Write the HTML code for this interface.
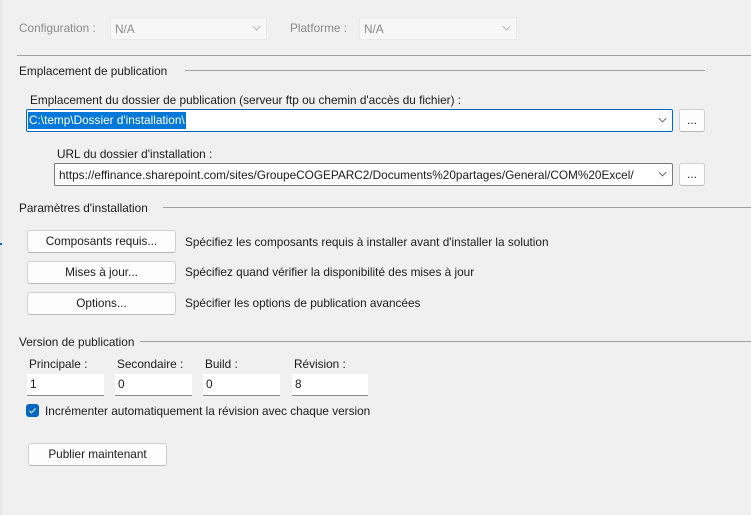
<!DOCTYPE html>
<html><head><meta charset="utf-8"><style>
*{box-sizing:border-box;margin:0;padding:0}
body{width:751px;height:515px;background:#f0f0f0;font-family:"Liberation Sans",sans-serif;font-size:11.8px;color:#1a1a1a;position:relative;overflow:hidden}
.a{position:absolute;white-space:nowrap}
.line{position:absolute;height:1px;background:#a0a0a0}
.combo{position:absolute;background:#fff;border:1px solid #7a7a7a;border-radius:2px;height:23px;padding:4px 0 0 4px}
.chev{position:absolute;right:6px;width:7px;height:7px;border-right:1px solid #555;border-bottom:1px solid #555;transform:rotate(45deg) scale(.8);top:5px}
.btn{position:absolute;background:#fdfdfd;border:1px solid #d0d0d0;border-bottom-color:#b8b8b8;border-radius:3px;height:23px;text-align:center;line-height:20px}
.inp{position:absolute;background:#fff;border-bottom:1px solid #8a8a8a;height:22px;padding:3px 0 0 3px}
</style></head><body>
<div class="a" style="left:0;top:0;width:2px;height:515px;background:#e6e6e6"></div>
<div class="a" style="left:19px;top:21px;color:#8a8a8a">Configuration :</div>
<div class="combo" style="left:110px;top:17px;width:157px;background:#f7f7f7;border-color:#e8e8e8;color:#8a8a8a">N/A<div class="chev" style="border-color:#aaa"></div></div>
<div class="a" style="left:290px;top:21px;color:#8a8a8a">Platforme :</div>
<div class="combo" style="left:359px;top:17px;width:158px;background:#f7f7f7;border-color:#e8e8e8;color:#8a8a8a">N/A<div class="chev" style="border-color:#aaa"></div></div>
<div class="line" style="left:17px;top:55px;width:734px"></div>
<div class="a" style="left:19px;top:64px">Emplacement de publication</div>
<div class="line" style="left:185px;top:70px;width:520px"></div>
<div class="a" style="left:30px;top:93px">Emplacement du dossier de publication (serveur ftp ou chemin d'accès du fichier) :</div>
<div class="combo" style="left:26px;top:109px;width:647px;border-color:#0067c0;padding:3px 0 0 1px"><span style="background:#0078d7;color:#fff;padding:1px 1px 2px 1px">C:\temp\Dossier d'installation\</span><div class="chev"></div></div>
<div class="btn" style="left:679px;top:109px;width:26px">...</div>
<div class="a" style="left:57px;top:147px">URL du dossier d'installation :</div>
<div class="combo" style="left:54px;top:163px;width:619px">https://effinance.sharepoint.com/sites/GroupeCOGEPARC2/Documents%20partages/General/COM%20Excel/<div class="chev"></div></div>
<div class="btn" style="left:679px;top:163px;width:26px">...</div>
<div class="a" style="left:19px;top:201px">Paramètres d'installation</div>
<div class="line" style="left:163px;top:207px;width:588px"></div>
<div class="a" style="left:0;top:243px;width:2px;height:2px;background:#0067c0"></div>
<div class="btn" style="left:27px;top:230px;width:149px">Composants requis...</div>
<div class="a" style="left:185px;top:235px">Spécifiez les composants requis à installer avant d'installer la solution</div>
<div class="btn" style="left:27px;top:261px;width:149px">Mises à jour...</div>
<div class="a" style="left:185px;top:265px">Spécifiez quand vérifier la disponibilité des mises à jour</div>
<div class="btn" style="left:27px;top:292px;width:149px">Options...</div>
<div class="a" style="left:185px;top:296px">Spécifier les options de publication avancées</div>
<div class="a" style="left:19px;top:335px">Version de publication</div>
<div class="line" style="left:140px;top:341px;width:611px"></div>
<div class="a" style="left:29px;top:357px">Principale :</div>
<div class="a" style="left:117px;top:357px">Secondaire :</div>
<div class="a" style="left:205px;top:357px">Build :</div>
<div class="a" style="left:294px;top:357px">Révision :</div>
<div class="inp" style="left:27px;top:374px;width:77px">1</div>
<div class="inp" style="left:115px;top:374px;width:77px">0</div>
<div class="inp" style="left:203px;top:374px;width:77px">0</div>
<div class="inp" style="left:292px;top:374px;width:76px">8</div>
<div class="a" style="left:26px;top:404px;width:13px;height:13px;background:#0067c0;border-radius:3px"><svg width="13" height="13" style="position:absolute;left:0;top:0"><path d="M3.5 6.8 L5.5 8.8 L9.5 4.5" fill="none" stroke="#fff" stroke-width="1"/></svg></div>
<div class="a" style="left:45px;top:404px">Incrémenter automatiquement la révision avec chaque version</div>
<div class="btn" style="left:28px;top:443px;width:139px">Publier maintenant</div>
</body></html>
